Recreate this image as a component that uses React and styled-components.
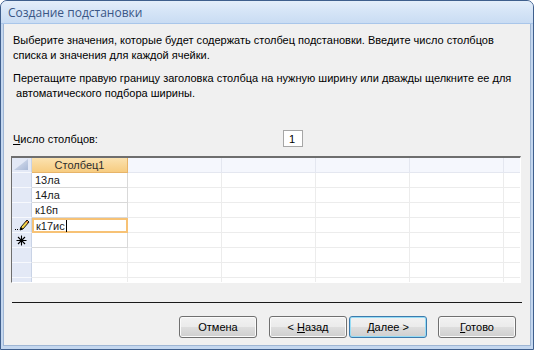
import React from "react";
import styled, { createGlobalStyle } from "styled-components";

const Global = createGlobalStyle`
  html, body { margin: 0; padding: 0; background: #fff; }
  body { font-family: "Liberation Sans", Arial, sans-serif; }
`;

const Window = styled.div`
  width: 534px;
  height: 350px;
  box-sizing: border-box;
  display: flex;
  flex-direction: column;
  border: 1px solid #3f5f8d;
  border-radius: 7px 7px 0 0;
  background: #c4d7ef;
  overflow: hidden;
`;

const TitleBar = styled.div`
  height: 22px;
  flex: none;
  display: flex;
  align-items: center;
  padding-left: 7px;
  background: linear-gradient(#e4eefa 0%, #d6e5f7 45%, #c9dcf3 100%);
  border-bottom: 1px solid #a9c6ea;
  font-family: "Open Sans", "Noto Sans", sans-serif;
  font-size: 12px;
  color: #3a5685;
`;

const Body = styled.div`
  flex: 1;
  margin: 0 2px 3px 2px;
  background: #f0f0f0;
  border-left: 1px solid #9fb6d4;
  border-right: 1px solid #9fb6d4;
  border-bottom: 1px solid #9fb6d4;
  display: flex;
  flex-direction: column;
  padding: 9px 0 0 0;
  font-size: 11px;
  color: #000;
`;

const Para = styled.p`
  margin: 0 0 ${(p) => p.$mb || 0}px 0;
  padding-left: 9px;
  line-height: 15px;
  white-space: pre;
`;

const CountRow = styled.div`
  display: flex;
  align-items: center;
  height: 17px;
  padding-left: 9px;
  margin-top: 29px;
`;

const CountLabel = styled.span`
  width: 270px;
  flex: none;
`;

const CountBox = styled.div`
  height: 15px;
  border: 1px solid #a6a6a6;
  background: #fff;
  display: flex;
  align-items: center;
  padding-left: 5px;
  box-sizing: content-box;
  width: 13px;
`;

const Grid = styled.div`
  margin: 9px 0 0 7px;
  width: 510px;
  height: 127px;
  box-sizing: border-box;
  border-top: 2px solid #6e6e6e;
  border-left: 1px solid #6e6e6e;
  border-right: 1px solid #fff;
  border-bottom: 1px solid #fff;
  background: #fff;
  overflow: hidden;
  display: grid;
  grid-template-columns: 20px 96px 94px 94px 94px 94px 18px;
  grid-auto-rows: 15px;
`;

const Cell = styled.div`
  box-sizing: border-box;
  border-right: 1px solid ${(p) => (p.$main ? "#d9d9d9" : "#ececec")};
  border-bottom: 1px solid ${(p) => (p.$main ? "#d9d9d9" : "#ececec")};
  padding-left: 3px;
  font-size: 11px;
  line-height: 14px;
  white-space: nowrap;
  color: #1a1a1a;
  display: flex;
  align-items: center;
`;

const HeadCell = styled(Cell)`
  background: ${(p) =>
    p.$active ? "linear-gradient(#fbe2b0, #f7cc80)" : "#f5f7fd"};
  border-right: 1px solid ${(p) => (p.$active ? "#e7b469" : "#e4e7f0")};
  border-bottom: 1px solid ${(p) => (p.$active ? "#e7b469" : "#e4e7f0")};
  justify-content: center;
  padding-left: 0;
  color: #2d2d2d;
`;

const Selector = styled.div`
  box-sizing: border-box;
  background: #e3e9f6;
  border-right: 1px solid #c9d3e6;
  border-bottom: 1px solid #f7f9fd;
  display: flex;
  align-items: center;
  justify-content: center;
`;

const EditCell = styled(Cell)`
  border: 2px solid #f7c275;
  padding-left: 2px;
`;

const Caret = styled.span`
  display: inline-block;
  width: 1px;
  height: 12px;
  background: #000;
  margin-left: 1px;
`;

const Separator = styled.div`
  margin: 19px 0 0 8px;
  width: 510px;
  height: 1px;
  background: #1a1a1a;
`;

const ButtonRow = styled.div`
  display: flex;
  margin: 13px 0 0 175px;
`;

const Button = styled.button`
  width: 78px;
  height: 22px;
  margin-right: ${(p) => p.$gap}px;
  box-sizing: border-box;
  border: 1px solid ${(p) => (p.$default ? "#3d7bad" : "#707070")};
  border-radius: 3px;
  background: linear-gradient(#f2f2f2 0%, #ebebeb 48%, #dddddd 52%, #cfcfcf 100%);
  box-shadow: ${(p) =>
    p.$default ? "inset 0 0 0 1px #97dcf5" : "inset 0 0 0 1px #fbfbfb"};
  font-family: "Liberation Sans", Arial, sans-serif;
  font-size: 11px;
  color: #000;
  padding: 0;
`;

const U = styled.span`
  text-decoration: underline;
`;

const Corner = () => (
  <svg width="19" height="14" viewBox="0 0 19 14">
    <defs>
      <linearGradient id="cg" x1="0" y1="0" x2="1" y2="1">
        <stop offset="0" stopColor="#dfe6f3" />
        <stop offset="1" stopColor="#a9b9d6" />
      </linearGradient>
    </defs>
    <polygon points="2,12 16,1 16,12" fill="url(#cg)" />
  </svg>
);

const Pencil = () => (
  <svg width="16" height="12" viewBox="0 0 16 12">
    <rect x="1" y="10" width="1" height="1" fill="#000" />
    <rect x="3" y="10" width="1" height="1" fill="#000" />
    <polygon points="6,11 7,8 13,1 15,3 9,10" fill="#f7d54a" stroke="#000" strokeWidth="0.9" />
    <polygon points="6,11 7,8 9,10" fill="#000" />
    <line x1="12" y1="2" x2="14" y2="4" stroke="#c0392b" strokeWidth="1" />
  </svg>
);

const Star = () => (
  <svg width="11" height="11" viewBox="0 0 11 11">
    <g stroke="#000" strokeWidth="1.1">
      <line x1="5.5" y1="0.5" x2="5.5" y2="10.5" />
      <line x1="0.5" y1="5.5" x2="10.5" y2="5.5" />
      <line x1="2" y1="2" x2="9" y2="9" />
      <line x1="9" y1="2" x2="2" y2="9" />
    </g>
  </svg>
);

const rows = ["13ла", "14ла", "к16п", "к17ис", "", "", "", ""];

export default function App() {
  return (
    <>
      <Global />
      <Window>
        <TitleBar>Создание подстановки</TitleBar>
        <Body>
          <Para $mb={8}>
            {"Выберите значения, которые будет содержать столбец подстановки. Введите число столбцов\nсписка и значения для каждой ячейки."}
          </Para>
          <Para>
            {"Перетащите правую границу заголовка столбца на нужную ширину или дважды щелкните ее для\n автоматического подбора ширины."}
          </Para>
          <CountRow>
            <CountLabel>
              <U>Ч</U>исло столбцов:
            </CountLabel>
            <CountBox>1</CountBox>
          </CountRow>
          <Grid>
            <Selector>
              <Corner />
            </Selector>
            <HeadCell $active>Столбец1</HeadCell>
            <HeadCell />
            <HeadCell />
            <HeadCell />
            <HeadCell />
            <HeadCell />
            {rows.map((r, i) => (
              <React.Fragment key={i}>
                <Selector>
                  {i === 3 && <Pencil />}
                  {i === 4 && <Star />}
                </Selector>
                {i === 3 ? (
                  <EditCell $main>
                    {r}
                    <Caret />
                  </EditCell>
                ) : (
                  <Cell $main={i < 5}>{r}</Cell>
                )}
                <Cell />
                <Cell />
                <Cell />
                <Cell />
                <Cell />
              </React.Fragment>
            ))}
          </Grid>
          <Separator />
          <ButtonRow>
            <Button $gap={12}>Отмена</Button>
            <Button $gap={2}>
              &lt; <U>Н</U>азад
            </Button>
            <Button $gap={11} $default>
              <U>Д</U>алее &gt;
            </Button>
            <Button $gap={0}>
              <U>Г</U>отово
            </Button>
          </ButtonRow>
        </Body>
      </Window>
    </>
  );
}
